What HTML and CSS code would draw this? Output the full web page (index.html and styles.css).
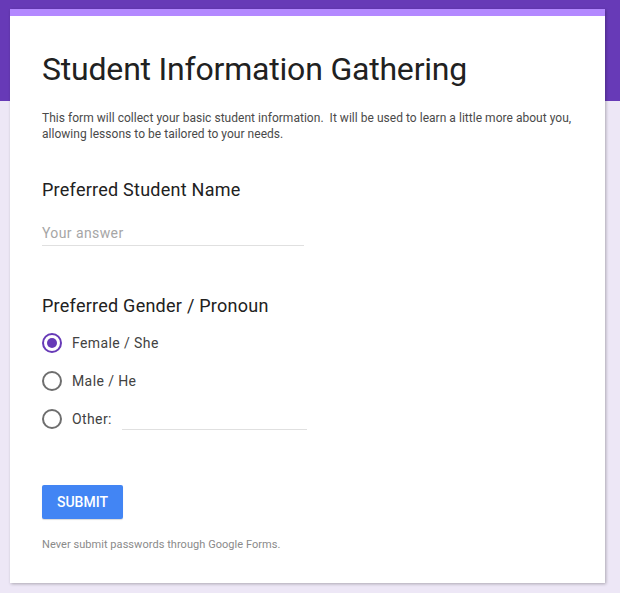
FILE: index.html
```html
<!DOCTYPE html>
<html>
<head>
<meta charset="utf-8">
<link rel="stylesheet" href="styles.css">
</head>
<body>
<div class="band"></div>
<main class="card">
  <h1 class="title">Student Information Gathering</h1>
  <p class="desc">This form will collect your basic student information.&nbsp; It will be used to learn a little more about you, allowing lessons to be tailored to your needs.</p>

  <section class="q q-name">
    <h2 class="q-title">Preferred Student Name</h2>
    <div class="text-input">Your answer</div>
  </section>

  <section class="q q-gender">
    <h2 class="q-title">Preferred Gender / Pronoun</h2>
    <div class="options">
      <div class="opt"><span class="radio checked"></span><span class="opt-label">Female / She</span></div>
      <div class="opt"><span class="radio"></span><span class="opt-label">Male / He</span></div>
      <div class="opt"><span class="radio"></span><span class="opt-label">Other:</span><span class="other-input"></span></div>
    </div>
  </section>

  <button class="submit">SUBMIT</button>
  <p class="footer">Never submit passwords through Google Forms.</p>
</main>
</body>
</html>
```
FILE: styles.css
```css
html, body {
  margin: 0;
  padding: 0;
}
body {
  background: #ede7f6;
  font-family: Roboto, "Liberation Sans", Arial, sans-serif;
  position: relative;
  min-height: 593px;
  padding-top: 9px;
  box-sizing: border-box;
}
.band {
  position: absolute;
  left: 0;
  top: 0;
  right: 0;
  height: 101px;
  background: #673ab7;
}
.card {
  position: relative;
  margin: 0 0 0 10px;
  width: 595px;
  box-sizing: border-box;
  background: #fff;
  border-top: 7px solid #b388ff;
  padding: 33px 32px 30px 32px;
  box-shadow: 1px 1px 3px rgba(0,0,0,0.28);
}
.title {
  margin: 0;
  font-size: 32px;
  line-height: 40px;
  font-weight: 400;
  letter-spacing: -0.2px;
  color: #212121;
}
.desc {
  margin: 21px 0 0;
  font-size: 12px;
  line-height: 16px;
  letter-spacing: 0.03px;
  color: #4a4a4a;
}
.q-title {
  margin: 0;
  font-size: 18px;
  line-height: 24px;
  font-weight: 400;
  letter-spacing: 0.25px;
  color: #212121;
}
.q-name {
  margin-top: 36px;
}
.text-input {
  margin-top: 21px;
  width: 262px;
  font-size: 14px;
  line-height: 20px;
  letter-spacing: 0.4px;
  padding-bottom: 2px;
  color: #a6a6a6;
  border-bottom: 1px solid #e0e0e0;
}
.q-gender {
  margin-top: 48px;
}
.options {
  margin-top: 6px;
}
.opt {
  display: flex;
  align-items: center;
  height: 38px;
}
.opt:nth-child(2) {
  height: 37px;
}
.opt:nth-child(3) {
  height: 40px;
}
.radio {
  width: 20px;
  height: 20px;
  box-sizing: border-box;
  border: 2px solid #6e6e6e;
  border-radius: 50%;
  display: flex;
  align-items: center;
  justify-content: center;
  flex: none;
}
.radio.checked {
  border-color: #673ab7;
}
.radio.checked::after {
  content: "";
  width: 10px;
  height: 10px;
  border-radius: 50%;
  background: #673ab7;
}
.opt-label {
  margin-left: 10px;
  font-size: 14px;
  line-height: 20px;
  letter-spacing: 0.4px;
  color: #424242;
}
.other-input {
  margin-left: 10px;
  width: 185px;
  height: 20px;
  border-bottom: 1px solid #e0e0e0;
}
.submit {
  display: block;
  margin-top: 46px;
  width: 81px;
  height: 34px;
  padding: 0;
  border: none;
  border-radius: 2px;
  background: #4285f4;
  color: #fff;
  font-family: Roboto, "Liberation Sans", Arial, sans-serif;
  font-size: 14px;
  font-weight: 500;
  letter-spacing: 0;
  box-shadow: 0 1px 1px rgba(0,0,0,0.15);
}
.footer {
  margin: 18px 0 0;
  font-size: 11px;
  line-height: 16px;
  letter-spacing: 0.05px;
  color: #8a8a8a;
}
```
